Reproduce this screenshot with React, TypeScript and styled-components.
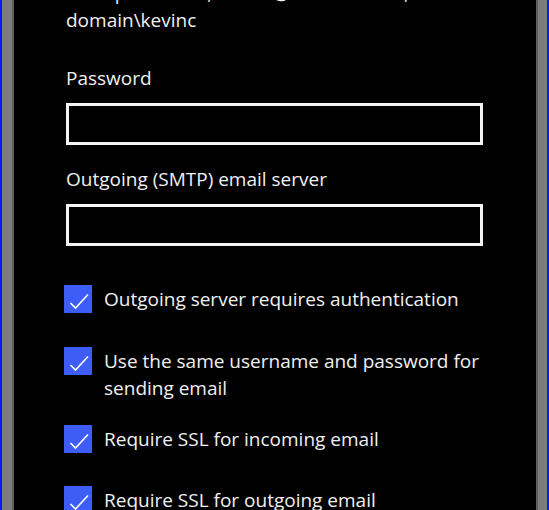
import React from "react";
import styled, { createGlobalStyle } from "styled-components";

const Global = createGlobalStyle`
  html, body { margin: 0; padding: 0; background: #0a14f0; }
  body { font-family: "Open Sans", "Noto Sans", sans-serif; }
`;

const Page = styled.div`
  height: 510px;
  width: 549px;
  box-sizing: border-box;
  padding: 0 2px;
  background: #1018f0;
  display: flex;
  overflow: hidden;
`;

const Frame = styled.div`
  flex: 1;
  display: flex;
  background: #7c7c7c;
  padding: 0 9px 0 10px;
`;

const Screen = styled.div`
  flex: 1;
  background: #000;
  border-left: 2px solid #5e5e5e;
  border-right: 2px solid #5e5e5e;
  padding: 0 53px 0 52px;
  display: flex;
  flex-direction: column;
  overflow: hidden;
  color: #f0f0f0;
  font-size: 19px;
  line-height: 27px;
`;

const Hint = styled.div`
  margin-top: -20px;
`;

const Label = styled.div<{ $gap: number }>`
  margin-top: ${(p) => p.$gap}px;
`;

const Input = styled.div`
  margin-top: 11px;
  height: 42px;
  flex: none;
  box-sizing: border-box;
  border: 3px solid #f4f4f4;
  background: #000;
`;

const CheckRow = styled.div<{ $gap: number }>`
  display: flex;
  align-items: flex-start;
  gap: 12px;
  margin-left: -2px;
  margin-top: ${(p) => p.$gap}px;
  flex: none;
`;

const Box = styled.div`
  flex: none;
  width: 28px;
  height: 28px;
  background: #3e5df7;
  display: flex;
  align-items: center;
  justify-content: center;
`;

const CheckText = styled.div`
  padding-top: 1px;
`;

const Check = () => (
  <Box>
    <svg width="28" height="28" viewBox="0 0 28 28">
      <path d="M6.5 18 L11.5 23 L24 9.5" fill="none" stroke="#fff" strokeWidth="1.6" />
    </svg>
  </Box>
);

const rows = [
  { text: "Outgoing server requires authentication", gap: 39 },
  { text: "Use the same username and password for sending email", gap: 34 },
  { text: "Require SSL for incoming email", gap: 23 },
  { text: "Require SSL for outgoing email", gap: 33 },
];

export default function App() {
  return (
    <>
      <Global />
      <Page>
        <Frame>
          <Screen>
            <Hint>
              Example: kevinc, kevinc@contoso.com,
              <br />
              domain\kevinc
            </Hint>
            <Label $gap={31}>Password</Label>
            <Input />
            <Label $gap={21}>Outgoing (SMTP) email server</Label>
            <Input />
            {rows.map((r) => (
              <CheckRow key={r.text} $gap={r.gap}>
                <Check />
                <CheckText>{r.text}</CheckText>
              </CheckRow>
            ))}
          </Screen>
        </Frame>
      </Page>
    </>
  );
}
